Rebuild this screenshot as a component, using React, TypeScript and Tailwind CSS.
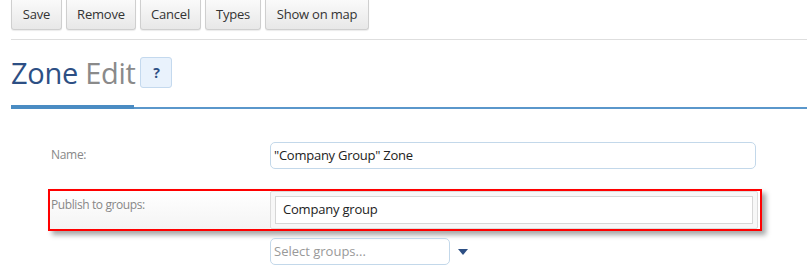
import { ReactNode } from "react"

const Btn = ({ children, w }: { children: ReactNode; w: string }) => (
    <button className={`${w} h-[30px] rounded-b-[3px] border border-t-0 border-[#cfcfcf] bg-gradient-to-b from-[#fafafa] to-[#e8e8e8] text-[13px] tracking-[-0.2px] text-[#333] shadow-[0_1px_1px_rgba(0,0,0,0.08)]`}>
        {children}
    </button>
)

export default function App() {
    return (
        <div className="w-[807px] h-[273px] overflow-hidden bg-white font-['Open_Sans',sans-serif]">
            <div className="flex gap-[4px] pl-[11px]">
                <Btn w="w-[51px]">Save</Btn>
                <Btn w="w-[70px]">Remove</Btn>
                <Btn w="w-[61px]">Cancel</Btn>
                <Btn w="w-[56px]">Types</Btn>
                <Btn w="w-[104px]">Show on map</Btn>
            </div>
            <div className="ml-[11px] mt-[9px] border-t border-[#dedede]"></div>

            <div className="ml-[11px] mt-[17px] flex items-center h-[31px]">
                <h1 className="text-[29px] leading-none tracking-[-0.3px]">
                    <span className="text-[#2d4f84]">Zone</span>{" "}
                    <span className="text-[#8a8a8a]">Edit</span>
                </h1>
                <button className="ml-[5px] w-[32px] h-[31px] rounded-[3px] border border-[#c4d9ee] bg-[#e9f2fc] text-[14px] font-bold text-[#2d4f84]">
                    ?
                </button>
            </div>
            <div className="ml-[11px] mt-[17px] flex items-end">
                <div className="w-[123px] h-[4px] bg-[#4a8cc3]"></div>
                <div className="flex-1 h-[2px] bg-[#5a97cb]"></div>
            </div>

            <div className="mt-[33px] flex pl-[51px]">
                <div className="w-[219px] pt-[4px] text-[12px] tracking-[-0.3px] text-[#888]">Name:</div>
                <div className="w-[486px] h-[27px] rounded-[5px] border border-[#c3d8ea] px-[3px] flex items-center text-[13px] tracking-[-0.25px] text-[#222]">
                    "Company Group" Zone
                </div>
            </div>

            <div className="mt-[20px] ml-[48px] w-[714px] h-[42px] border-2 border-[#f00] shadow-[4px_4px_5px_rgba(0,0,0,0.35)] flex">
                <div className="w-[220px] pl-[1px] pt-[5px] text-[12px] tracking-[-0.4px] text-[#888] bg-gradient-to-b from-white to-[#f4f4f4]">Publish to groups:</div>
                <div className="w-[488px] h-[38px] border border-[#dcdcdc] rounded-[2px] bg-[#f7f7f7] p-[4px]">
                    <div className="h-full border border-[#d6d6d6] bg-white pl-[7px] flex items-center text-[13px] tracking-[-0.2px] text-[#222]">
                        Company group
                    </div>
                </div>
            </div>

            <div className="mt-[7px] ml-[270px] flex items-center">
                <div className="w-[180px] h-[27px] rounded-[5px] border border-[#c3d8ea] px-[3px] flex items-center text-[13px] text-[#999]">
                    Select groups...
                </div>
                <svg className="ml-[8px]" width="10" height="6" viewBox="0 0 10 6">
                    <path d="M0 0 H10 L5 6 Z" fill="#2d4f84" />
                </svg>
            </div>
        </div>
    )
}
